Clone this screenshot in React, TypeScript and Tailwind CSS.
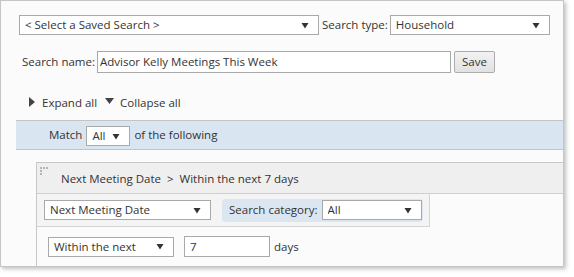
const Arrow = () => (
  <svg width="8" height="7" viewBox="0 0 8 7" className="shrink-0">
    <path d="M0.5 1 L7.5 1 L4 6.5 Z" fill="#333" />
  </svg>
);

const Select = ({ value, className }: { value: string; className: string }) => (
  <div
    className={`flex shrink-0 items-center justify-between border border-[#a9a9a9] bg-white pl-[5px] pr-[9px] ${className}`}
  >
    <span className="overflow-hidden whitespace-nowrap leading-[16px]">{value}</span>
    <Arrow />
  </div>
);

const Grip = () => (
  <svg width="10" height="8" viewBox="0 0 10 8" className="shrink-0">
    <rect x={0} y={0} width="2" height="2" fill="#b5b5b5" />
    <rect x={3} y={0} width="2" height="2" fill="#b5b5b5" />
    <rect x={6} y={0} width="2" height="2" fill="#b5b5b5" />
    <rect x={0} y={3} width="2" height="2" fill="#b5b5b5" />
    <rect x={0} y={6} width="2" height="2" fill="#b5b5b5" />
  </svg>
);

export default function App() {
  return (
    <div className="h-[277px] w-[574px] bg-white font-['Open_Sans',sans-serif] text-[11.5px] leading-[16px] text-[#333]">
      <div className="flex h-[267px] w-[564px] flex-col overflow-hidden border border-[#c6c6c6] bg-[#fbfbfb] shadow-[2px_2px_4px_rgba(0,0,0,0.25)]">
        {/* saved search / type */}
        <div className="mt-[14px] flex items-center pl-[18px]">
          <Select value="< Select a Saved Search >" className="h-[20px] w-[300px]" />
          <span className="ml-[3px] mr-[2px] whitespace-nowrap">Search type:</span>
          <Select value="Household" className="h-[20px] w-[160px]" />
        </div>

        {/* search name */}
        <div className="mt-[16px] flex items-center pl-[21px]">
          <span className="mr-[2px] whitespace-nowrap">Search name:</span>
          <div className="flex h-[22px] w-[354px] items-center border border-[#a9a9a9] bg-white pl-[2px]">
            Advisor Kelly Meetings This Week
          </div>
          <button className="ml-[3px] h-[22px] w-[41px] rounded-[2px] border border-[#acacac] bg-gradient-to-b from-[#f2f2f2] to-[#e2e2e2] text-[11.5px] text-[#333]">
            Save
          </button>
        </div>

        {/* expand / collapse */}
        <div className="mt-[22px] flex items-center pl-[28px]">
          <svg width="6" height="10" viewBox="0 0 6 10" className="-mt-[3px]">
            <path d="M0 0 L6 5 L0 10 Z" fill="#444" />
          </svg>
          <span className="ml-[7px]">Expand all</span>
          <svg width="9" height="6" viewBox="0 0 9 6" className="ml-[8px] -mt-[5px]">
            <path d="M0 0 L9 0 L4.5 6 Z" fill="#444" />
          </svg>
          <span className="ml-[6px]">Collapse all</span>
        </div>

        {/* match bar */}
        <div className="ml-[15px] mt-[9px] flex h-[30px] items-center border-y border-[#c4c4c4] bg-[#d9e5f1] pl-[33px]">
          <span>Match</span>
          <Select value="All" className="ml-[4px] mt-[2px] h-[20px] w-[44px]" />
          <span className="ml-[4px]">of the following</span>
        </div>

        {/* criterion panel */}
        <div className="ml-[35px] mt-[12px] flex flex-1 flex-col border-l border-t border-[#c8c8c8]">
          <div className="flex h-[31px] items-start border-b border-[#cfcfcf] bg-[#efefef] pl-[3px] pt-[4px]">
            <Grip />
            <span className="ml-[11px] mt-[4px] whitespace-nowrap">
              Next Meeting Date&nbsp;&nbsp;&gt;&nbsp;&nbsp;Within the next 7 days
            </span>
          </div>
          <div className="flex h-[33px] w-[393px] items-center border-b border-r border-[#d4d4d4] bg-[#f4f4f4] pl-[7px]">
            <Select value="Next Meeting Date" className="h-[20px] w-[167px]" />
            <div className="ml-[11px] flex h-[23px] w-[201px] shrink-0 items-center rounded-[4px] bg-[#dce6f1] pl-[7px]">
              <span className="mr-[4px] whitespace-nowrap">Search category:</span>
              <Select value="All" className="h-[20px] w-[100px]" />
            </div>
          </div>
          <div className="mt-[9px] flex items-center pl-[11px]">
            <Select value="Within the next" className="h-[20px] w-[126px]" />
            <div className="ml-[10px] flex h-[21px] w-[86px] items-center border border-[#a9a9a9] bg-white pl-[5px]">
              7
            </div>
            <span className="ml-[4px]">days</span>
          </div>
        </div>
      </div>
    </div>
  );
}
